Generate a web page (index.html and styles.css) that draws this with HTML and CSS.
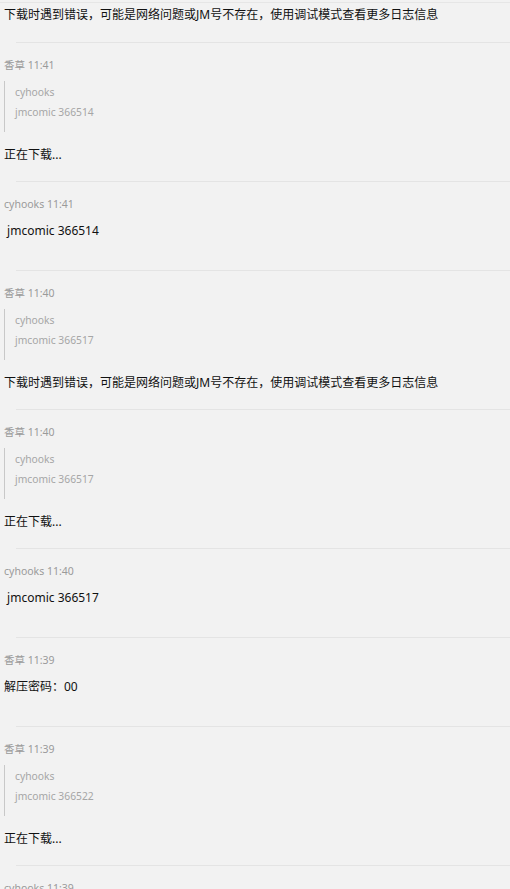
FILE: index.html
```html
<!DOCTYPE html>
<html lang="zh-CN">
<head>
<meta charset="utf-8">
<title>chat</title>
<link rel="stylesheet" href="styles.css">
</head>
<body>
<div class="chat">
  <div class="msg tail">
    <p class="content">下载时遇到错误，可能是网络问题或JM号不存在，使用调试模式查看更多日志信息</p>
  </div>

  <div class="sep"></div>
  <div class="msg quoted">
    <div class="meta">香草 11:41</div>
    <div class="quote"><div>cyhooks</div><div>jmcomic 366514</div></div>
    <p class="content">正在下载...</p>
  </div>

  <div class="sep"></div>
  <div class="msg simple">
    <div class="meta">cyhooks 11:41</div>
    <p class="content">&nbsp;jmcomic 366514</p>
  </div>

  <div class="sep"></div>
  <div class="msg quoted">
    <div class="meta">香草 11:40</div>
    <div class="quote"><div>cyhooks</div><div>jmcomic 366517</div></div>
    <p class="content">下载时遇到错误，可能是网络问题或JM号不存在，使用调试模式查看更多日志信息</p>
  </div>

  <div class="sep"></div>
  <div class="msg quoted">
    <div class="meta">香草 11:40</div>
    <div class="quote"><div>cyhooks</div><div>jmcomic 366517</div></div>
    <p class="content">正在下载...</p>
  </div>

  <div class="sep"></div>
  <div class="msg simple">
    <div class="meta">cyhooks 11:40</div>
    <p class="content">&nbsp;jmcomic 366517</p>
  </div>

  <div class="sep"></div>
  <div class="msg simple">
    <div class="meta">香草 11:39</div>
    <p class="content">解压密码：00</p>
  </div>

  <div class="sep"></div>
  <div class="msg quoted">
    <div class="meta">香草 11:39</div>
    <div class="quote"><div>cyhooks</div><div>jmcomic 366522</div></div>
    <p class="content">正在下载...</p>
  </div>

  <div class="sep"></div>
  <div class="msg simple">
    <div class="meta">cyhooks 11:39</div>
    <p class="content">&nbsp;jmcomic 366522</p>
  </div>
</div>
</body>
</html>
```
FILE: styles.css
```css
html, body {
  margin: 0;
  padding: 0;
  background: #f2f2f2;
}
body {
  font-family: "Noto Sans", "Noto Sans CJK SC", sans-serif;
  color: #111111;
  overflow: hidden;
}
.chat {
  border-top: 1px solid #e6e6e6;
  margin-top: 2px;
  padding-left: 4px;
}
.sep {
  height: 1px;
  background: #e4e4e4;
  margin-left: 12px;
}
.msg {
  padding-top: 14px;
}
.msg.tail {
  padding-top: 2px;
}
.meta {
  font-size: 10.5px;
  line-height: 16px;
  color: #9a9a9a;
}
.quote {
  margin-top: 8px;
  border-left: 1px solid #c8c8c8;
  padding: 1px 0 10px 10px;
  font-size: 10.3px;
  line-height: 20px;
  color: #a6a6a6;
}
.content {
  margin: 0;
  font-size: 12px;
  line-height: 20px;
  white-space: nowrap;
}
.msg.tail .content {
  margin-bottom: 17px;
}
.msg.quoted .content {
  margin-top: 13px;
  margin-bottom: 16px;
}
.msg.simple .content {
  margin-top: 9px;
  margin-bottom: 29px;
}
```
